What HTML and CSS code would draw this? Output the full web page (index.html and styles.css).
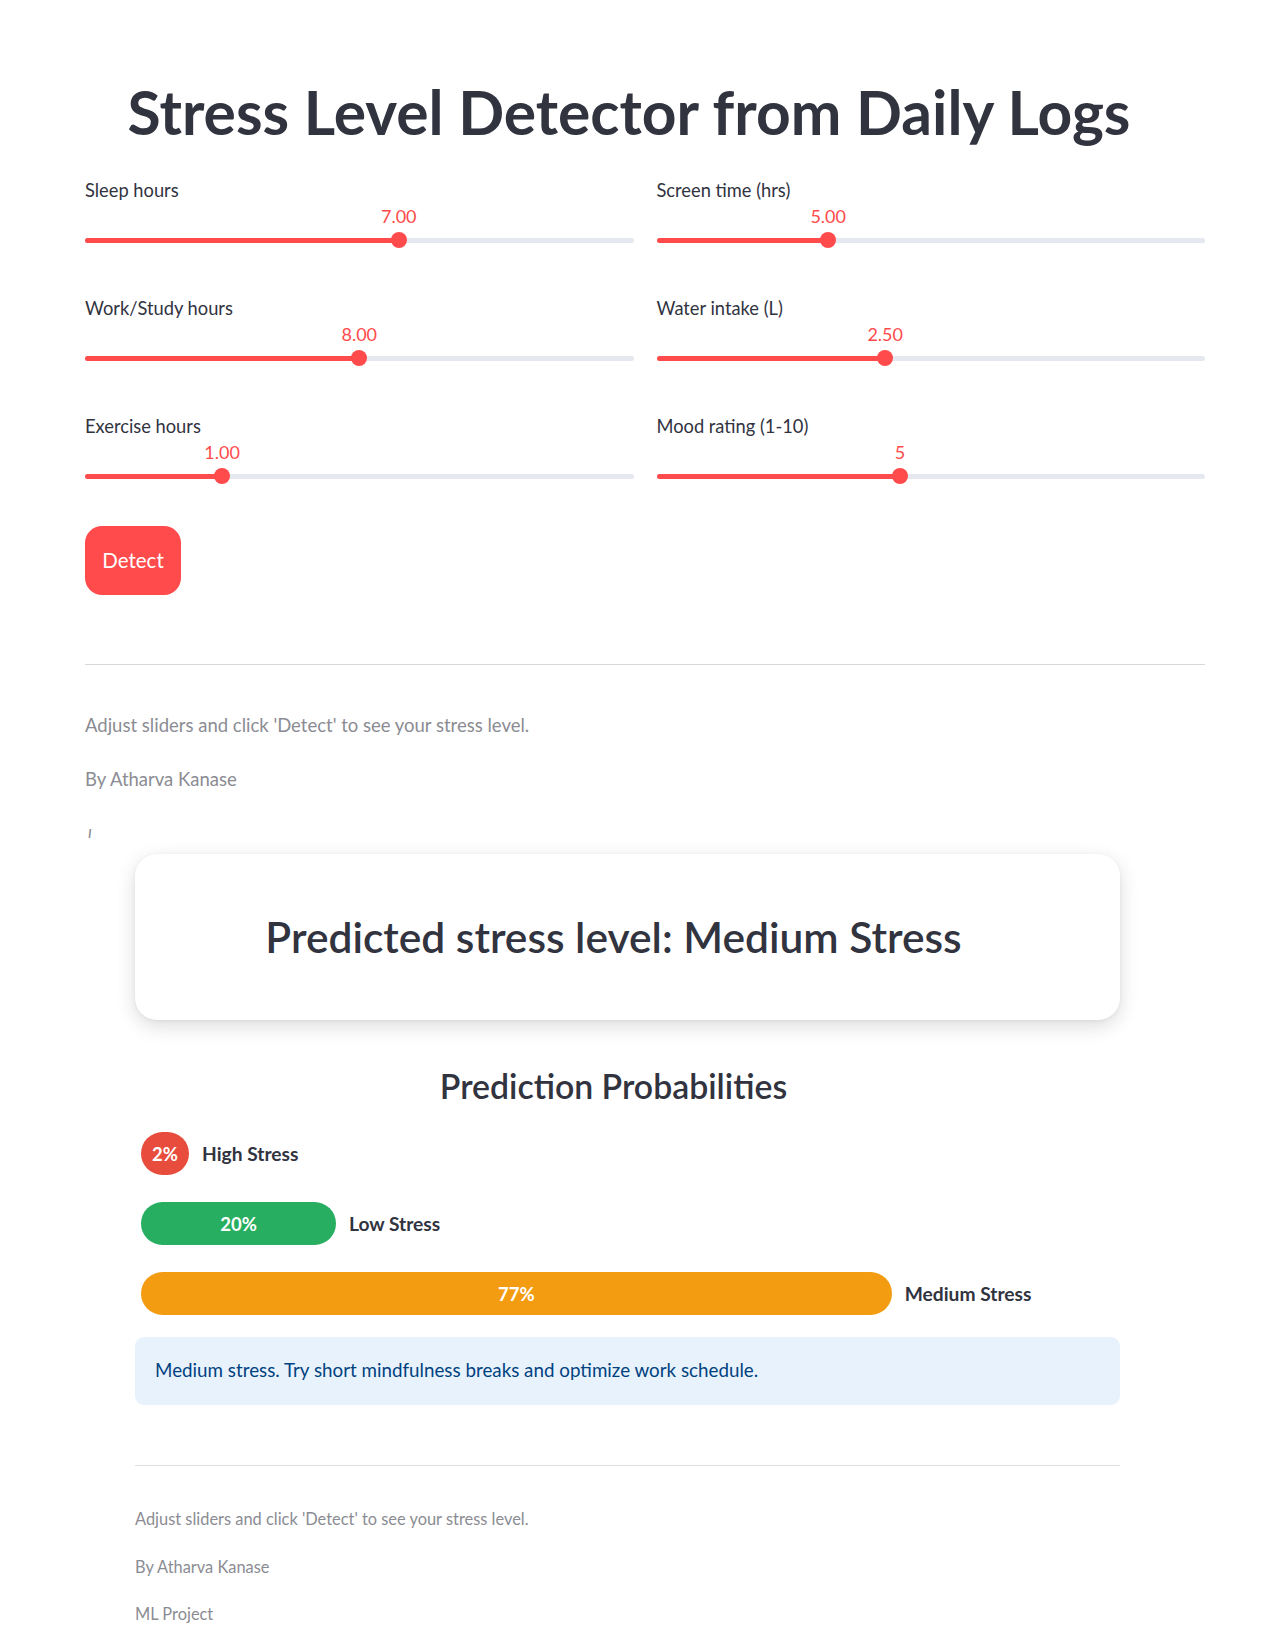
FILE: index.html
```html
<!DOCTYPE html>
<html lang="en">
<head>
<meta charset="utf-8">
<title>Stress Level Detector from Daily Logs</title>
<link rel="stylesheet" href="styles.css">
</head>
<body>
<main class="page">
  <h1 class="title">Stress Level Detector from Daily Logs</h1>

  <section class="sliders">
    <div class="slider">
      <div class="slider-label">Sleep hours</div>
      <div class="slider-value-row"><span class="slider-value" style="left:57.2%">7.00</span></div>
      <div class="slider-track"><div class="slider-fill" style="width:57.2%"></div><span class="slider-thumb" style="left:57.2%"></span></div>
    </div>
    <div class="slider">
      <div class="slider-label">Screen time (hrs)</div>
      <div class="slider-value-row"><span class="slider-value" style="left:31.3%">5.00</span></div>
      <div class="slider-track"><div class="slider-fill" style="width:31.3%"></div><span class="slider-thumb" style="left:31.3%"></span></div>
    </div>
    <div class="slider">
      <div class="slider-label">Work/Study hours</div>
      <div class="slider-value-row"><span class="slider-value" style="left:50%">8.00</span></div>
      <div class="slider-track"><div class="slider-fill" style="width:50%"></div><span class="slider-thumb" style="left:50%"></span></div>
    </div>
    <div class="slider">
      <div class="slider-label">Water intake (L)</div>
      <div class="slider-value-row"><span class="slider-value" style="left:41.7%">2.50</span></div>
      <div class="slider-track"><div class="slider-fill" style="width:41.7%"></div><span class="slider-thumb" style="left:41.7%"></span></div>
    </div>
    <div class="slider">
      <div class="slider-label">Exercise hours</div>
      <div class="slider-value-row"><span class="slider-value" style="left:25%">1.00</span></div>
      <div class="slider-track"><div class="slider-fill" style="width:25%"></div><span class="slider-thumb" style="left:25%"></span></div>
    </div>
    <div class="slider">
      <div class="slider-label">Mood rating (1-10)</div>
      <div class="slider-value-row"><span class="slider-value" style="left:44.4%">5</span></div>
      <div class="slider-track"><div class="slider-fill" style="width:44.4%"></div><span class="slider-thumb" style="left:44.4%"></span></div>
    </div>
  </section>

  <button class="detect-btn" type="button">Detect</button>

  <hr class="divider">

  <div class="notes">
    <p class="note">Adjust sliders and click 'Detect' to see your stress level.</p>
    <p class="note">By Atharva Kanase</p>
    <p class="note note-cut">ı</p>
  </div>

  <section class="result">
    <div class="result-card">
      <h2 class="result-title">Predicted stress level: Medium Stress</h2>
    </div>

    <h3 class="prob-title">Prediction Probabilities</h3>

    <div class="bars">
      <div class="bar-row">
        <div class="bar bar-high" style="width:2%">2%</div>
        <span class="bar-label">High Stress</span>
      </div>
      <div class="bar-row">
        <div class="bar bar-low" style="width:20%">20%</div>
        <span class="bar-label">Low Stress</span>
      </div>
      <div class="bar-row">
        <div class="bar bar-medium" style="width:77%">77%</div>
        <span class="bar-label">Medium Stress</span>
      </div>
    </div>

    <div class="info-box">Medium stress. Try short mindfulness breaks and optimize work schedule.</div>

    <hr class="divider divider-light">

    <div class="footer">
      <p class="footer-line">Adjust sliders and click 'Detect' to see your stress level.</p>
      <p class="footer-line">By Atharva Kanase</p>
      <p class="footer-line">ML Project</p>
    </div>
  </section>
</main>
</body>
</html>
```

FILE: styles.css
```css
* {
  box-sizing: border-box;
}

html, body {
  margin: 0;
  padding: 0;
  background: #ffffff;
}

body {
  font-family: Lato, "Noto Sans", "Liberation Sans", sans-serif;
  color: #31333f;
}

.page {
  width: 1275px;
  padding: 0 70px 40px 85px;
}

.title {
  margin: 75px 0 0 0;
  padding-right: 32px;
  font-size: 60.5px;
  line-height: 73px;
  font-weight: 700;
  text-align: center;
  color: #31333f;
}

.sliders {
  margin-top: 30px;
  display: grid;
  grid-template-columns: 1fr 1fr;
  column-gap: 23px;
  row-gap: 43px;
}

.slider {
  display: flex;
  flex-direction: column;
}

.slider-label {
  height: 24px;
  font-size: 18.3px;
  line-height: 24px;
  color: #31333f;
}

.slider-value-row {
  position: relative;
  margin-top: 3px;
  height: 22px;
}

.slider-value {
  position: absolute;
  top: 0;
  transform: translateX(-50%);
  font-size: 18px;
  line-height: 22px;
  color: #ff4b4b;
  white-space: nowrap;
}

.slider-track {
  position: relative;
  height: 26px;
  display: flex;
  align-items: center;
}

.slider-track::before {
  content: "";
  position: absolute;
  left: 0;
  right: 0;
  top: 11px;
  height: 5px;
  border-radius: 3px;
  background: #e5e8ef;
}

.slider-fill {
  position: relative;
  height: 5px;
  border-radius: 3px;
  background: #ff4b4b;
}

.slider-thumb {
  position: absolute;
  top: 5px;
  width: 16px;
  height: 16px;
  margin-left: -8px;
  border-radius: 50%;
  background: #ff4b4b;
}

.detect-btn {
  display: block;
  margin-top: 37px;
  width: 96px;
  height: 69px;
  border: none;
  border-radius: 17px;
  background: #ff4b4b;
  color: #ffffff;
  font-family: Lato, "Noto Sans", "Liberation Sans", sans-serif;
  font-size: 20.5px;
  padding: 0 0 2px 0;
}

.divider {
  margin: 69px 0 0 0;
  border: none;
  border-top: 1px solid #d7d8db;
  height: 0;
}

.notes {
  margin-top: 48px;
  display: flex;
  flex-direction: column;
  gap: 29.5px;
}

.note {
  margin: 0;
  font-size: 18.5px;
  line-height: 24px;
  color: #8b8c93;
}

.note-cut {
  padding-left: 3px;
  font-style: italic;
  font-size: 17px;
  color: #8b8c93;
}

.result {
  margin: 10px 85px 0 50px;
}

.result-card {
  height: 166px;
  border-radius: 22px;
  background: #ffffff;
  box-shadow: 0 6px 20px rgba(0, 0, 0, 0.14), 0 1px 4px rgba(0, 0, 0, 0.05);
  display: flex;
  align-items: center;
  justify-content: center;
  padding: 0 28px 0 0;
}

.result-title {
  margin: 0;
  font-size: 42.5px;
  line-height: 50px;
  font-weight: 600;
  color: #31333f;
}

.prob-title {
  margin: 46px 0 0 0;
  padding-right: 28px;
  text-align: center;
  font-size: 33.8px;
  line-height: 40px;
  font-weight: 600;
  color: #31333f;
}

.bars {
  margin-top: 26px;
  padding: 0 4px 0 6px;
  display: flex;
  flex-direction: column;
  gap: 27px;
}

.bar-row {
  display: flex;
  align-items: center;
  height: 43px;
}

.bar {
  height: 43px;
  min-width: 48px;
  border-radius: 22px;
  display: flex;
  align-items: center;
  justify-content: center;
  color: #ffffff;
  font-size: 18.5px;
  font-weight: 700;
}

.bar-high {
  background: #e74c3c;
}

.bar-low {
  background: #27ae60;
}

.bar-medium {
  background: #f39c12;
}

.bar-label {
  margin-left: 13px;
  font-size: 19.2px;
  font-weight: 700;
  color: #31333f;
  white-space: nowrap;
}

.info-box {
  margin-top: 22px;
  height: 68px;
  border-radius: 9px;
  background: #e8f2fc;
  color: #004280;
  font-size: 18.8px;
  line-height: 66px;
  padding-left: 20px;
}

.divider-light {
  margin-top: 60px;
  border-top-color: #dedfe2;
}

.footer {
  margin-top: 42px;
  display: flex;
  flex-direction: column;
  gap: 25.5px;
}

.footer-line {
  margin: 0;
  font-size: 16.4px;
  line-height: 22px;
  color: #8b8c93;
}
```
